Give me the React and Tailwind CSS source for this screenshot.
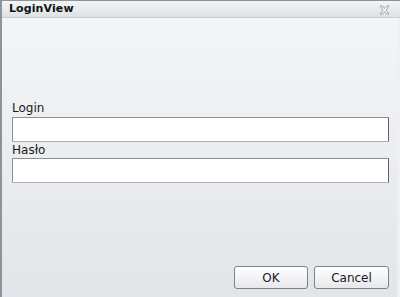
export default function App() {
  return (
    <div className="w-[400px] h-[297px] flex flex-col bg-[#8e9399] pl-[2px] pt-px overflow-hidden font-['DejaVu_Sans',sans-serif]">
      {/* title bar */}
      <div className="h-[17px] flex items-center justify-between pl-[7px] pr-[10px] bg-gradient-to-b from-[#f3f4f5] to-[#dfe2e5] border-b border-[#c9cdd2]">
        <span className="text-[11px] font-bold text-[#111] tracking-[0.1px]">LoginView</span>
        <svg width="11" height="10" viewBox="0 0 11 10" className="mt-px">
          <path d="M1 1h2.5L5.5 3.5L7.5 1H10L7 5L10 9H7.5L5.5 6.5L3.5 9H1L4 5Z" fill="#f4f5f6" stroke="#9aa0a6" strokeWidth="0.9" strokeLinejoin="round" />
        </svg>
      </div>
      {/* body */}
      <div className="flex-1 flex flex-col bg-gradient-to-b from-[#f4f5f6] to-[#e2e5e9] border-r-[3px] border-[#eef0f2] pl-[10px] pr-[8px]">
        <div className="flex flex-col pt-[83px]">
          <label className="text-[12px] text-[#1a1a1a] leading-[15px] h-[16px]">Login</label>
          <input className="h-[25px] bg-white border border-[#8a8f96] border-b-[#aab0b6] border-r-[#5e6369] rounded-[1px] outline-none" />
          <label className="text-[12px] text-[#1a1a1a] leading-[15px] h-[15px] mt-px">Hasło</label>
          <input type="password" className="h-[25px] bg-white border border-[#8a8f96] border-b-[#aab0b6] border-r-[#5e6369] rounded-[1px] outline-none" />
        </div>
        <div className="flex-1" />
        <div className="flex justify-end gap-[6px] pb-[8px]">
          <button className="w-[74px] h-[23px] text-[12px] text-[#1a1a1a] bg-gradient-to-b from-white to-[#e6e8eb] border border-[#7d8288] rounded-[3px]">OK</button>
          <button className="w-[75px] h-[23px] text-[12px] text-[#1a1a1a] bg-gradient-to-b from-white to-[#e6e8eb] border border-[#7d8288] rounded-[3px]">Cancel</button>
        </div>
      </div>
    </div>
  );
}
